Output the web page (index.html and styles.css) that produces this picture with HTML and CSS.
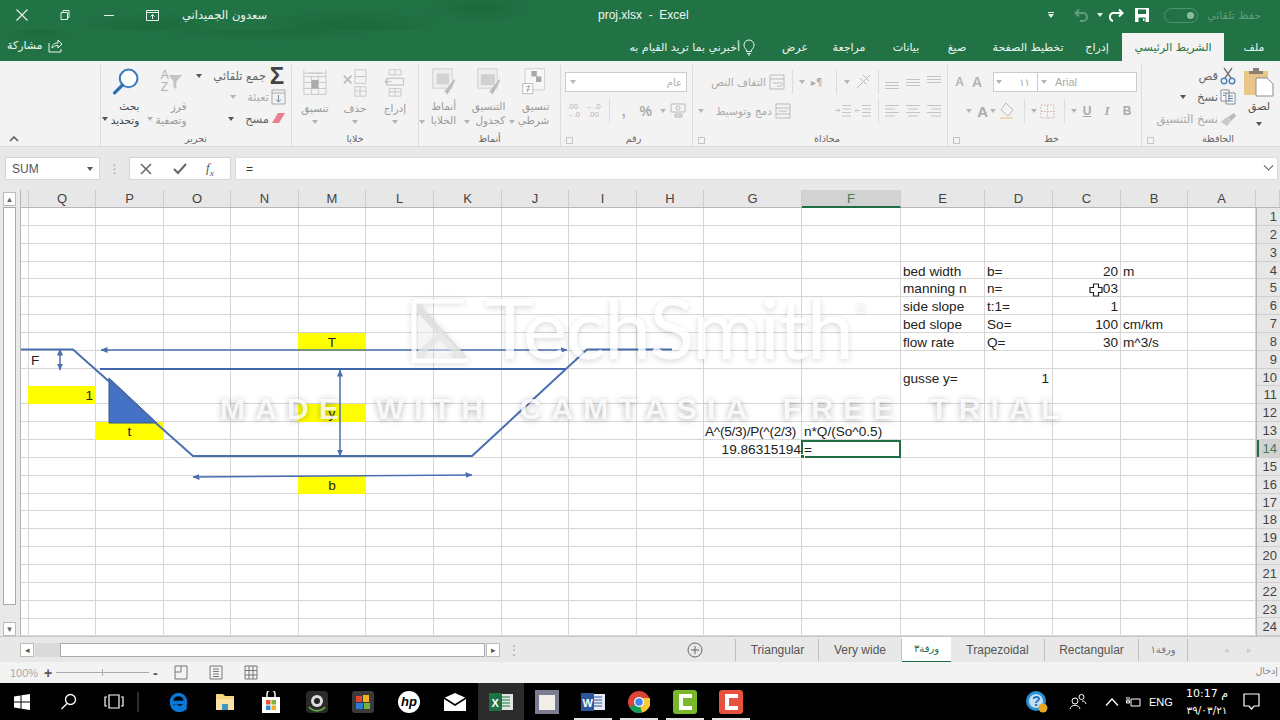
FILE: index.html
```html
<!DOCTYPE html>
<html lang="ar">
<head>
<meta charset="utf-8">
<title>proj.xlsx - Excel</title>
<link rel="stylesheet" href="styles.css">
</head>
<body>
<div class="app">

<header class="titlebar">
  <div class="win-btns">
    <span class="wb"><svg width="14" height="14" viewBox="0 0 14 14"><path d="M1.500 1.500l11 11M12.500 1.500l-11 11" stroke="#e8f0ea" stroke-width="1.200"/></svg></span>
    <span class="wb"><svg width="12" height="12" viewBox="0 0 12 12" fill="none" stroke="#e8f0ea"><path d="M2 3.500h6.500v7H2zM4 3.500V1.500h6v7H8.500"/></svg></span>
    <span class="wb"><svg width="12" height="12" viewBox="0 0 12 12"><path d="M1 6.500h10" stroke="#e8f0ea"/></svg></span>
    <span class="wb"><svg width="15" height="13" viewBox="0 0 15 13" fill="none" stroke="#e8f0ea"><path d="M1.500 1.500h12v10h-12zM1.500 3.500h12M7.500 10V5.500M5.500 7.500l2-2 2 2"/></svg></span>
    <span class="user">سعدون الجميداني</span>
  </div>
  <div class="doc-title">proj.xlsx&nbsp; -&nbsp; Excel</div>
  <div class="qat">
    <span class="q-more"><i class="q-line"></i><i class="q-tri"></i></span>
    <svg class="q-undo" width="18" height="16" viewBox="0 0 18 16" fill="none" stroke="#5f9d7b" stroke-width="2"><path d="M6 2.500L2.500 6 6 9.500M3 6h7a4 4 0 0 1 0 8H7"/></svg>
    <span class="q-caret"></span>
    <svg class="q-redo" width="18" height="16" viewBox="0 0 18 16" fill="none" stroke="#fff" stroke-width="2"><path d="M12 2.500L15.500 6 12 9.500M15 6H8a4 4 0 0 0-2 8"/></svg>
    <svg class="q-save" width="16" height="16" viewBox="0 0 16 16"><path d="M1 1h14v14H1z" fill="#fff"/><path d="M4 2.500h8v4.500H4zM4.500 10.500h7V15h-7z" fill="#217346"/><path d="M9 11.500h1.500V14H9z" fill="#fff"/></svg>
    <span class="toggle"><i class="knob"></i></span>
    <span class="autosave">حفظ تلقائي</span>
  </div>
</header>

<nav class="tabbar">
  <div class="share"><span>مشاركة</span><svg width="15" height="15" viewBox="0 0 15 15" fill="none" stroke="#eef5f0"><path d="M1 5v9h12v-3"/><path d="M4 10c0-4 3-5 6-5V2l4 4-4 4V7.500c-3 0-4 1-6 2.500z"/></svg></div>
  <div class="tabs">
    <span class="tab t-file">ملف</span>
    <span class="tab active">الشريط الرئيسي</span>
    <span class="tab t-ins">إدراج</span>
    <span class="tab t-page">تخطيط الصفحة</span>
    <span class="tab t-form">صيغ</span>
    <span class="tab t-data">بيانات</span>
    <span class="tab t-rev">مراجعة</span>
    <span class="tab t-view">عرض</span>
    <span class="tell"><svg width="12" height="17" viewBox="0 0 12 17" fill="none" stroke="#eef5f0"><path d="M3.500 11C2 9.500 1 8 1 6a5 5 0 0 1 10 0c0 2-1 3.500-2.500 5v1.500h-5zM4 14.500h4M5 16h2"/></svg><span>أخبرني بما تريد القيام به</span></span>
  </div>
</nav>

<section class="ribbon">
  <!-- Clipboard -->
  <div class="group g-clip">
    <div class="gbody clip-body">
      <div class="bigbtn paste">
        <svg width="32" height="30" viewBox="0 0 32 30"><path d="M1 4h24v24H1z" fill="#e9c58a"/><path d="M6 4h14v3H6z" fill="#8a7f70"/><path d="M10 1h6v4h-6z" fill="#8a7f70"/><path d="M13 11h11l6 6v12H13z" fill="#fff" stroke="#8f8f8f"/></svg>
        <span>لصق</span><i class="caret"></i>
      </div>
      <div class="stack">
        <div class="line-btn"><svg width="16" height="18" viewBox="0 0 16 18" fill="none"><path d="M4 1l7 10M12 1L5 11" stroke="#777" stroke-width="1.400"/><circle cx="4" cy="14" r="2.800" stroke="#4f7fb8" stroke-width="1.400"/><circle cx="12" cy="14" r="2.800" stroke="#4f7fb8" stroke-width="1.400"/></svg><span>قص</span></div>
        <div class="line-btn"><svg width="16" height="16" viewBox="0 0 16 16" fill="#fff" stroke="#888"><path d="M1 1h8v11H1zM6 4h9v11H6z"/><path d="M8 7h5M8 9.500h5M8 12h5M3 4h3M3 6.500h2" stroke="#5580aa"/></svg><span>نسخ</span><i class="caret dark gap"></i></div>
        <div class="line-btn off"><svg width="16" height="14" viewBox="0 0 16 14"><path d="M8 5l6-4 2 3-5 5z" fill="#bbb"/><path d="M1 10l6-5 4 4-4 5z" fill="#c8c8c8"/></svg><span>نسخ التنسيق</span></div>
      </div>
    </div>
    <div class="glabel shifted"><span>الحافظة</span><i class="launch"></i></div>
  </div>

  <!-- Font -->
  <div class="group g-font">
    <div class="gbody rows">
      <div class="rowline">
        <span class="field f-name"><i class="caret"></i><b>Arial</b></span>
        <span class="field f-size"><i class="caret"></i><b>١١</b></span>
        <span class="letter up">A</span>
        <span class="letter dn">A</span>
      </div>
      <div class="rowline">
        <span class="fmt b">B</span><span class="fmt i">I</span><span class="fmt u">U</span><i class="caret"></i><i class="vsep"></i>
        <svg class="ic16" width="17" height="17" viewBox="0 0 17 17" fill="none" stroke="#d8bdbd" stroke-dasharray="2 1"><path d="M2 2h13v13H2zM2 8.500h13M8.500 2v13"/></svg><i class="caret"></i><i class="vsep"></i>
        <svg class="ic16" width="18" height="18" viewBox="0 0 18 18" fill="none" stroke="#bbb"><path d="M8 1l7 7-5 6-7-6z"/><path d="M2 16h13" stroke="#eadbb0" stroke-width="2"/></svg><i class="caret"></i>
        <span class="letter big">A</span><i class="caret"></i>
      </div>
    </div>
    <div class="glabel shifted"><span>خط</span><i class="launch"></i></div>
  </div>

  <!-- Alignment -->
  <div class="group g-align">
    <div class="gbody rows">
      <div class="rowline al-row">
        <svg class="al" width="16" height="14" viewBox="0 0 16 14" stroke="#c4c4c4"><path d="M1 1.500h14M1 4.500h14M1 7.500h14"/></svg>
        <svg class="al" width="16" height="14" viewBox="0 0 16 14" stroke="#c4c4c4"><path d="M1 4.500h14M1 7.500h14M1 10.500h14"/></svg>
        <svg class="al" width="16" height="14" viewBox="0 0 16 14" stroke="#c4c4c4"><path d="M1 7.500h14M1 10.500h14M1 13.500h14"/></svg>
        <i class="vsep wide"></i>
        <svg class="al2" width="18" height="18" viewBox="0 0 18 18" fill="none" stroke="#bbb"><path d="M2 15L15 2M5 5l6 6M8 2l6 6"/></svg><i class="caret c-or"></i><i class="vsep sp1"></i>
        <span class="pil">▸¶</span><i class="caret"></i><i class="vsep sp2"></i>
        <span class="wide-btn"><svg width="16" height="16" viewBox="0 0 16 16" fill="none" stroke="#bbb"><path d="M1 1h14v14H1zM1 5h14M4 9h8c2 0 2 3 0 3H8"/></svg><span>التفاف النص</span></span>
      </div>
      <div class="rowline al-row">
        <svg class="al" width="16" height="14" viewBox="0 0 16 14" stroke="#c4c4c4"><path d="M1 1.500h14M5 5h10M1 8.500h14M5 12h10"/></svg>
        <svg class="al" width="16" height="14" viewBox="0 0 16 14" stroke="#c4c4c4"><path d="M1 1.500h14M3 5h10M1 8.500h14M3 12h10"/></svg>
        <svg class="al" width="16" height="14" viewBox="0 0 16 14" stroke="#c4c4c4"><path d="M1 1.500h14M1 5h10M1 8.500h14M1 12h10"/></svg>
        <i class="vsep wide"></i>
        <svg class="al3" width="16" height="14" viewBox="0 0 16 14" fill="none" stroke="#bfc6cc"><path d="M7 1.500h9M7 5h9M7 8.500h9M7 12h9M5 6.500H0M2 4.500L0 6.500l2 2"/></svg>
        <svg class="al3" width="16" height="14" viewBox="0 0 16 14" fill="none" stroke="#bfc6cc"><path d="M7 1.500h9M7 5h9M7 8.500h9M7 12h9M0 6.500h5M3 4.500l2 2-2 2"/></svg>
        <span class="wide-btn merge"><svg width="16" height="16" viewBox="0 0 16 16" fill="none" stroke="#bbb"><path d="M1 1h14v14H1zM1 5h14M1 11h14M4 8h8"/></svg><span>دمج وتوسيط</span></span><i class="caret c-mg"></i>
      </div>
    </div>
    <div class="glabel shifted"><span>محاذاة</span><i class="launch"></i></div>
  </div>

  <!-- Number -->
  <div class="group g-num">
    <div class="gbody rows">
      <div class="rowline"><span class="field f-num"><b>عام</b><i class="caret"></i></span></div>
      <div class="rowline num-row">
        <svg width="18" height="18" viewBox="0 0 18 18" fill="none" stroke="#bbb"><path d="M2 2h14v8H2z"/><circle cx="9" cy="6" r="2"/><path d="M6 12h7v3H6z" fill="#ddd"/></svg><i class="caret"></i>
        <span class="pct">%</span><span class="comma">,</span><i class="vsep"></i>
        <span class="dec">←.0<br>.00</span><span class="dec">.00<br>→.0</span>
      </div>
    </div>
    <div class="glabel shifted"><span>رقم</span><i class="launch"></i></div>
  </div>

  <!-- Styles -->
  <div class="group g-styles">
    <div class="gbody cols">
      <div class="bigbtn st">
        <svg width="30" height="36" viewBox="0 0 30 36"><path d="M4 1h25v27H4z" fill="#f7f7f7" stroke="#c8c8c8"/><path d="M12 4h7v7h-7zM18 11h7v7h-7z" fill="#a9a9a9"/><path d="M1 20h13v13H1z" fill="#fff" stroke="#aaa"/><path d="M5 24h6M5 28h6M9 22l-2 9" stroke="#999" fill="none"/></svg>
        <span>تنسيق<br>شرطي</span><i class="caret abs"></i>
      </div>
      <div class="bigbtn st">
        <svg width="30" height="36" viewBox="0 0 30 36"><path d="M1 1h25v25H1z" fill="#eee" stroke="#c8c8c8"/><path d="M5 8h18v14H5z" fill="#d0d0d0"/><path d="M16 30L29 14l1 2-10 18z" fill="#bbb"/></svg>
        <span>التنسيق<br>كجدول</span><i class="caret abs"></i>
      </div>
      <div class="bigbtn st">
        <svg width="30" height="36" viewBox="0 0 30 36"><path d="M1 1h25v25H1z" fill="#eee" stroke="#c8c8c8"/><path d="M6 7h16v14H6z" fill="#d3d3d3"/><path d="M16 30L29 14l1 2-10 18z" fill="#bbb"/></svg>
        <span>أنماط<br>الخلايا</span><i class="caret abs"></i>
      </div>
    </div>
    <div class="glabel"><span>أنماط</span></div>
  </div>

  <!-- Cells -->
  <div class="group g-cells">
    <div class="gbody cols">
      <div class="bigbtn cellbtn">
        <svg width="26" height="34" viewBox="0 0 26 34" fill="none" stroke="#c4c4c4"><path d="M6 2h14v6H6zM13 2v6M6 24h14v9H6zM13 24v9M6 28h14"/><path d="M3 12h20v8H3zM9 16H1M4 13l-3 3 3 3" stroke="#b5b5b5"/></svg>
        <span>إدراج</span><i class="caret"></i>
      </div>
      <div class="bigbtn cellbtn">
        <svg width="28" height="34" viewBox="0 0 28 34" fill="none" stroke="#c4c4c4"><path d="M14 2h13v8H14zM14 10h13v8H14zM14 22h13v11H14zM20 22v11M14 27h13"/><path d="M1 9l9 9M10 9l-9 9" stroke="#bbb" stroke-width="2"/></svg>
        <span>حذف</span><i class="caret"></i>
      </div>
      <div class="bigbtn cellbtn">
        <svg width="28" height="34" viewBox="0 0 28 34" fill="none" stroke="#c4c4c4"><path d="M1 6h26M1 2v8M27 2v8M6 6h16"/><path d="M1 10h26v21H1zM1 17h26M1 24h26M10 10v21M18 10v21"/><path d="M10 14h8v10h-8z" fill="#aaa" stroke="none"/></svg>
        <span>تنسيق</span><i class="caret"></i>
      </div>
    </div>
    <div class="glabel"><span>خلايا</span></div>
  </div>

  <!-- Editing -->
  <div class="group g-edit">
    <div class="gbody edit-body">
      <div class="stack ed">
        <div class="line-btn"><span class="sigma">Σ</span><span>جمع تلقائي</span><i class="caret dark gap"></i></div>
        <div class="line-btn off"><svg width="15" height="16" viewBox="0 0 15 16" fill="none" stroke="#aaa"><path d="M1 1h13v14H1zM1 4h13" /><path d="M7.500 6v7M5 10.500l2.500 2.500 2.500-2.500" stroke="#6d8da8"/></svg><span>تعبئة</span><i class="caret gap"></i></div>
        <div class="line-btn"><svg width="15" height="14" viewBox="0 0 15 14"><path d="M7 1h7L8 11H1z" fill="#ea7f8d"/></svg><span>مسح</span><i class="caret dark gap"></i></div>
      </div>
      <div class="bigbtn sort">
        <svg width="32" height="38" viewBox="0 0 32 38"><text x="1" y="16" class="az">A</text><text x="1" y="33" class="az">Z</text><path d="M12 10h19l-8 9v11l-4-3v-8z" fill="#c4c4c4"/></svg>
        <span>فرز<br>وتصفية</span><i class="caret abs"></i>
      </div>
      <div class="bigbtn find">
        <svg width="26" height="26" viewBox="0 0 26 26" fill="none"><circle cx="16" cy="10" r="8.500" stroke="#3a7cc0" stroke-width="2" fill="#fff"/><path d="M10 16.500L2.500 24" stroke="#2d6fb5" stroke-width="3.200" stroke-linecap="round"/></svg>
        <span>بحث<br>وتحديد</span><i class="caret dark abs"></i>
      </div>
    </div>
    <div class="glabel"><span>تحرير</span></div>
  </div>

  <div class="collapse"><svg width="10" height="6" viewBox="0 0 10 6" fill="none" stroke="#555" stroke-width="1.500"><path d="M1 5l4-4 4 4"/></svg></div>
</section>

<section class="formulabar">
  <div class="namebox"><span>SUM</span><i class="caret dark"></i></div>
  <div class="fdots">⋮</div>
  <div class="fbtns">
    <svg width="12" height="12" viewBox="0 0 12 12"><path d="M1 1l10 10M11 1L1 11" stroke="#666" stroke-width="1.500"/></svg>
    <svg width="14" height="12" viewBox="0 0 14 12"><path d="M1 6l4 4 8-9" fill="none" stroke="#666" stroke-width="2"/></svg>
    <span class="fx">f<sub>x</sub></span>
  </div>
  <div class="finput"><span>=</span><i class="caret-v"></i></div>
</section>

<main class="sheet">
  <div class="vscroll">
    <span class="vbtn">▴</span>
    <div class="vtrack"><div class="vthumb"></div></div>
    <span class="vbtn">▾</span>
  </div>
  <div class="sheet-main">
    <div class="colhead">
      <span></span><span>Q</span><span>P</span><span>O</span><span>N</span><span>M</span><span>L</span><span>K</span><span>J</span><span>I</span><span>H</span><span>G</span><span class="selcol">F</span><span>E</span><span>D</span><span>C</span><span>B</span><span>A</span><span class="corner"></span>
    </div>
    <div class="sheet-body">
      <div class="grid">
        <i class="vl cr"></i><i class="vl cq"></i><i class="vl cp"></i><i class="vl co"></i><i class="vl cn"></i><i class="vl cm"></i><i class="vl cl"></i><i class="vl ck"></i><i class="vl cj"></i><i class="vl ci"></i><i class="vl ch"></i><i class="vl cg"></i><i class="vl cf"></i><i class="vl ce"></i><i class="vl cd"></i><i class="vl cc"></i><i class="vl cb"></i><i class="vl ca"></i>

        <div class="cell ce r4">bed width</div><div class="cell cd r4">b=</div><div class="cell cc r4 num">20</div><div class="cell cb r4">m</div>
        <div class="cell ce r5">manning n</div><div class="cell cd r5">n=</div><div class="cell cc r5 num">.03</div>
        <div class="cell ce r6">side slope</div><div class="cell cd r6">t:1=</div><div class="cell cc r6 num">1</div>
        <div class="cell ce r7">bed slope</div><div class="cell cd r7">So=</div><div class="cell cc r7 num">100</div><div class="cell cb r7">cm/km</div>
        <div class="cell ce r8">flow rate</div><div class="cell cd r8">Q=</div><div class="cell cc r8 num">30</div><div class="cell cb r8">m^3/s</div>
        <div class="cell ce r10">gusse y=</div><div class="cell cd r10 num">1</div>
        <div class="cell cg r13 tight">A^(5/3)/P(^(2/3)</div><div class="cell cf r13">n*Q/(So^0.5)</div>
        <div class="cell cg r14 num tightr">19.86315194</div><div class="cell cf r14 sel">=<i class="handle"></i></div>

        <div class="cell cm r8 yel ctr">T</div>
        <div class="cell cm r12 yel ctr">y</div>
        <div class="cell cm r16 yel ctr">b</div>
        <div class="cell cq r11 yel num">1</div>
        <div class="cell cp r13 yel ctr">t</div>
        <div class="cell cq r9 flabel">F</div>

        <svg class="diagram" width="1235" height="428" viewBox="21 208 1235 428" fill="none">
          <defs>
            <marker id="ah" markerWidth="8" markerHeight="8" refX="6.500" refY="3" orient="auto-start-reverse" markerUnits="userSpaceOnUse"><path d="M0 0l7 3-7 3z" fill="#4a6fb0"/></marker>
          </defs>
          <path d="M109 378v45h48z" fill="#4472c4" stroke="#2f5597"/>
          <path d="M21 349.500h52L193 456h279l115-106.500h85" stroke="#4a6fb0" stroke-width="2"/>
          <path d="M100 369h466" stroke="#3f66aa" stroke-width="2"/>
          <path class="dim" d="M101 350h466" marker-start="url(#ah)" marker-end="url(#ah)"/>
          <path class="dim" d="M340 370v86" marker-start="url(#ah)" marker-end="url(#ah)"/>
          <path class="dim" d="M60 349v21" marker-start="url(#ah)" marker-end="url(#ah)"/>
          <path class="dim" d="M193 477l279-2" marker-start="url(#ah)" marker-end="url(#ah)"/>
        </svg>
      </div>
      <div class="rowhead">
        <span>1</span><span>2</span><span>3</span><span>4</span><span>5</span><span>6</span><span>7</span><span>8</span><span>9</span><span>10</span><span>11</span><span>12</span><span>13</span><span class="selrow">14</span><span>15</span><span>16</span><span>17</span><span>18</span><span>19</span><span>20</span><span>21</span><span>22</span><span>23</span><span>24</span>
      </div>
    </div>
  </div>

  <svg class="cursor" width="14" height="14" viewBox="0 0 14 14"><path d="M4.500 1h5v3.500H13v5H9.500V13h-5V9.500H1v-5h3.500z" fill="#fff" stroke="#222" stroke-width="1.200"/></svg>

  <div class="wm-top">
    <svg class="wm-logo" width="60" height="64" viewBox="0 0 60 64" fill="none" stroke-linejoin="miter"><path d="M8 4l44 50H8z" fill="#fff" fill-opacity=".55"/><path d="M4 4l50 56" stroke="#dcdcdc" stroke-width="7"/><path d="M4 60L30 36 52 60" stroke="#e4e4e4" stroke-width="6"/><path d="M4 2v60h54M4 2h50" stroke="#fff" stroke-width="5"/></svg>
    <span class="wm-name">TechSmith</span><sup class="wm-r">®</sup>
  </div>
  <div class="wm-bottom">MADE WITH CAMTASIA FREE TRIAL</div>
</main>

<footer class="sheetbar">
  <span class="hbtn">◂</span>
  <div class="htrack"><div class="hthumb"></div></div>
  <span class="hbtn">▸</span>
  <span class="hdots">⋮</span>
  <span class="addsheet"><svg width="16" height="16" viewBox="0 0 16 16" fill="none" stroke="#666"><circle cx="8" cy="8" r="7"/><path d="M8 4v8M4 8h8"/></svg></span>
  <div class="sheettabs">
    <span class="stab w-tri">Triangular</span>
    <span class="stab w-vw">Very wide</span>
    <span class="stab cur">ورقة٣</span>
    <span class="stab w-tra">Trapezoidal</span>
    <span class="stab w-rec">Rectangular</span>
    <span class="stab w-ar">ورقة١</span>
  </div>
  <span class="nav"><i>◂</i><i>▸</i></span>
</footer>

<div class="statusbar">
  <span class="zoompct">100%</span>
  <span class="zplus">+</span>
  <span class="zslider"><i></i></span>
  <span class="zminus">-</span>
  <svg class="vw" width="14" height="15" viewBox="0 0 14 15" fill="none" stroke="#777"><path d="M1 1h12v13H1zM7 1v6H1"/></svg>
  <svg class="vw" width="14" height="15" viewBox="0 0 14 15" fill="none" stroke="#777"><path d="M1 1h12v13H1zM4 4h6M4 6.500h6M4 9h6M4 11.500h6"/></svg>
  <svg class="vw" width="14" height="15" viewBox="0 0 14 15" fill="none" stroke="#777"><path d="M1 1h12v13H1zM1 5.500h12M1 10h12M5 1v13M9 1v13"/></svg>
  <span class="mode">إدخال</span>
</div>

<div class="taskbar">
  <div class="tb-left">
    <span class="tk"><svg width="16" height="16" viewBox="0 0 16 16" fill="#fff"><path d="M0 2.500l6.500-1v6H0zM7.500 1.300L16 0v7.500H7.500zM0 8.500h6.500v6l-6.500-1zM7.500 8.500H16V16l-8.500-1.300z"/></svg></span>
    <span class="tk"><svg width="17" height="17" viewBox="0 0 17 17" fill="none" stroke="#fff" stroke-width="1.300"><circle cx="10.500" cy="6.500" r="5"/><path d="M7 10.500L1.500 16"/></svg></span>
    <span class="tk"><svg width="20" height="15" viewBox="0 0 20 15" fill="none" stroke="#fff" stroke-width="1.200"><path d="M5 1h10v13H5zM3 3H1v9h2M17 3h2v9h-2"/></svg></span>
    <i class="tk-sep"></i>
    <span class="tk"><svg width="20" height="22" viewBox="0 0 20 20" fill="none"><path d="M2.500 10.500h14c0-5-3-8-7-8-4 0-7 3-7 8 0 5 3.500 8 7.500 8 2.500 0 4.500-.7 6-2v-3.500c-1.500 1.500-3.500 2.500-5.500 2.500-2 0-3.500-1-3.500-3" stroke="#0a78d7" stroke-width="3.500"/></svg></span>
    <span class="tk"><svg width="20" height="20" viewBox="0 0 20 20"><path d="M1 2h7l2 2h9v14H1z" fill="#f3d67d"/><path d="M1 7h18v11H1z" fill="#f9e4a3"/><path d="M7 12h6v6H7z" fill="#3f95c4"/></svg></span>
    <span class="tk"><svg width="20" height="22" viewBox="0 0 20 22"><path d="M1 6h18v16H1z" fill="#fff"/><path d="M6 6V3a4 4 0 0 1 8 0v3" fill="none" stroke="#fff" stroke-width="1.500"/><path d="M5 9h4.500v4.500H5z" fill="#e2572b"/><path d="M10.500 9H15v4.500h-4.500z" fill="#7fb53b"/><path d="M5 14.500h4.500V19H5z" fill="#2d8ad8"/><path d="M10.500 14.500H15V19h-4.500z" fill="#f2b01e"/></svg></span>
    <span class="tk"><svg width="22" height="22" viewBox="0 0 22 22"><rect width="22" height="22" rx="4" fill="#2a2a2a"/><circle cx="11" cy="10" r="6" fill="#ddd"/><circle cx="11" cy="10" r="3" fill="#222"/><path d="M3 16c4 5 12 5 16 0" stroke="#5fa34a" stroke-width="2" fill="none"/></svg></span>
    <span class="tk"><svg width="22" height="22" viewBox="0 0 22 22"><rect width="22" height="22" rx="3" fill="#3a3a3a"/><path d="M4 5h6v6H4z" fill="#e2452b"/><path d="M11 4h6v7h-6z" fill="#f2b01e"/><path d="M4 12h7v6H4z" fill="#2e7bd6"/><path d="M12 12h6v6h-6z" fill="#6fb33c"/></svg></span>
    <span class="tk"><span class="hp">hp</span></span>
    <span class="tk"><svg width="22" height="18" viewBox="0 0 22 18"><path d="M0 5L11 0l11 5v13H0z" fill="#fff"/><path d="M0 5l11 7 11-7" fill="none" stroke="#000" stroke-width="1.500"/></svg></span>
    <span class="tk on"><svg width="24" height="20" viewBox="0 0 24 20"><path d="M10 2h14v16H10z" fill="#dfe9e2"/><path d="M13 5h8M13 8h8M13 11h8M13 14h8" stroke="#1e7145"/><path d="M0 1h13v18H0z" fill="#1e7145"/><text x="2.500" y="14.500" class="ltr-x">X</text></svg></span>
    <span class="tk"><svg width="24" height="24" viewBox="0 0 24 24"><path d="M0 0h24v24H0z" fill="#7c7c90"/><path d="M4 5h16v15H4z" fill="#f0eee6"/></svg></span>
    <span class="tk run"><svg width="24" height="20" viewBox="0 0 24 20"><path d="M10 2h14v16H10z" fill="#e4e9f2"/><path d="M13 5h8M13 8h8M13 11h8M13 14h8" stroke="#2b579a"/><path d="M0 1h13v18H0z" fill="#2b579a"/><text x="1.500" y="14.500" class="ltr-x">W</text></svg></span>
    <span class="tk run"><svg width="22" height="22" viewBox="0 0 22 22"><circle cx="11" cy="11" r="11" fill="#db4437"/><path d="M11 11L1.500 16.500A11 11 0 0 0 14 21.600z" fill="#0f9d58"/><path d="M11 11l3 10.600A11 11 0 0 0 21.800 7H11z" fill="#fcc934"/><circle cx="11" cy="11" r="5" fill="#fff"/><circle cx="11" cy="11" r="3.800" fill="#4285f4"/></svg></span>
    <span class="tk run"><svg width="24" height="24" viewBox="0 0 24 24"><rect width="24" height="24" rx="3" fill="#78b82a"/><path d="M19 6H8v12h11" fill="none" stroke="#fff" stroke-width="4"/></svg></span>
    <span class="tk run"><svg width="24" height="24" viewBox="0 0 24 24"><rect width="24" height="24" rx="3" fill="#e8513d"/><path d="M19 6H8v12h11" fill="none" stroke="#fff" stroke-width="4"/></svg></span>
  </div>
  <div class="tb-right">
    <svg class="help" width="22" height="22" viewBox="0 0 22 22"><circle cx="10" cy="10" r="10" fill="#2b8fd6"/><circle cx="10" cy="10" r="7" fill="#bfe0f5"/><text x="6" y="15" class="q">?</text><circle cx="17" cy="17" r="4.500" fill="#e8a51e"/></svg>
    <svg class="people" width="18" height="18" viewBox="0 0 18 18" fill="none" stroke="#fff"><circle cx="6" cy="8" r="3"/><path d="M1 16c1-5 9-5 10 0"/><circle cx="12.500" cy="4" r="2.500"/><path d="M13 8c2 0 3.500 1 4 3"/></svg>
    <svg class="chev" width="14" height="8" viewBox="0 0 14 8" fill="none" stroke="#fff" stroke-width="1.300"><path d="M1 7.500L7 1l6 6.500"/></svg>
    <svg class="batt" width="15" height="14" viewBox="0 0 15 14" fill="none" stroke="#fff"><path d="M5 4h9v7H5zM1 2v4M3 2v4M0.500 6h3v2h-3z"/></svg>
    <span class="eng">ENG</span>
    <span class="clock"><span class="time">10:17 م</span><bdi class="date">٣٩/٠٣/٢١</bdi></span>
    <svg class="notif" width="17" height="17" viewBox="0 0 17 17" fill="none" stroke="#fff" stroke-width="1.200"><path d="M1 1h15v12h-5l-2.500 3L6 13H1z"/></svg>
  </div>
</div>

</div>
</body>
</html>
```
FILE: styles.css
```css
* { box-sizing: border-box; }
html, body { margin: 0; padding: 0; }
body { font-family: "Liberation Sans", "DejaVu Sans", sans-serif; background: #fff; overflow: hidden; }
.app { width: 1280px; height: 720px; display: flex; flex-direction: column; overflow: hidden; }

i { font-style: normal; display: block; }

/* Title bar */
.titlebar { height: 30px; display: flex; align-items: center; color: #f0f6f2; position: relative; background:
  radial-gradient(ellipse 90px 16px at 150px 26px, #1c6a3e, transparent),
  radial-gradient(ellipse 110px 26px at 350px 30px, #1b683c, transparent),
  radial-gradient(ellipse 70px 16px at 480px 8px, #1c6a3e, transparent),
  #217346; }
.win-btns { display: flex; align-items: center; width: 560px; }
.wb { width: 43.500px; display: flex; justify-content: center; }
.user { font: 11.500px "DejaVu Sans", sans-serif; margin-left: 8px; }
.doc-title { position: absolute; left: 598px; top: 8px; font: 12px "Liberation Sans", sans-serif; }
.qat { position: absolute; left: 1047px; top: 0; height: 30px; width: 233px; display: flex; align-items: center; }
.q-more { width: 7px; display: flex; flex-direction: column; gap: 1px; align-items: center; }
.q-line { width: 6px; height: 1px; background: #e4efe8; }
.q-tri { width: 0; height: 0; border: 3px solid transparent; border-top: 4px solid #e4efe8; border-bottom: 0; }
.q-undo { margin-left: 19px; }
.q-caret { width: 0; height: 0; border: 3px solid transparent; border-top: 4px solid #e4efe8; border-bottom: 0; margin: 0 4px 0 6px; }
.q-redo { margin-left: 0; }
.q-save { margin-left: 9px; }
.toggle { width: 34px; height: 15px; border: 1px solid #4f9370; border-radius: 8px; margin-left: 14px; display: flex; justify-content: flex-end; align-items: center; padding-right: 3px; }
.knob { width: 7px; height: 7px; border-radius: 50%; background: #8cbba2; }
.autosave { font: 11px "DejaVu Sans", sans-serif; color: #5f9d7b; margin-left: 9px; }

/* Tab bar */
.tabbar { height: 31px; display: flex; justify-content: space-between; align-items: stretch; color: #eef5f0; background:
  radial-gradient(ellipse 40px 18px at 40px 0, #1c6a3e, transparent),
  radial-gradient(ellipse 150px 14px at 270px 0, #1c6a3e, transparent), #217346; }
.share { display: flex; align-items: center; gap: 5px; padding-left: 7px; font: 11px "DejaVu Sans", sans-serif; }
.tabs { direction: rtl; display: flex; align-items: flex-end; font: 11px "DejaVu Sans", sans-serif; height: 100%; width: 660px; }
.tab { display: flex; align-items: center; justify-content: center; height: 28px; white-space: nowrap; }
.t-file { width: 56px; padding-left: 4px; }
.tab.active { width: 102px; background: #f3f3f3; color: #217346; }
.t-ins { width: 44px; margin-right: 3px; }
.t-page { width: 90px; margin-right: 2px; }
.t-form { width: 44px; margin-right: 4px; }
.t-data { width: 44px; margin-right: 7px; }
.t-rev { width: 52px; margin-right: 9px; }
.t-view { width: 36px; margin-right: 10px; }
.tell { display: flex; align-items: center; gap: 3px; margin-right: 22px; height: 28px; white-space: nowrap; }

/* Ribbon */
.ribbon { height: 86px; background: #f3f3f3; border-bottom: 1px solid #dadada; direction: rtl; display: flex; font: 10px "DejaVu Sans", sans-serif; color: #777; }
.group { position: relative; display: flex; flex-direction: column; border-left: 1px solid #dcdcdc; margin-top: 4px; flex: none; }
.gbody { flex: 1; }
.glabel { height: 15px; display: flex; justify-content: center; align-items: center; position: relative; color: #666; font-size: 9.500px; }
.glabel.shifted { padding-left: 14px; }
.launch { position: absolute; left: 5px; bottom: 2px; width: 7px; height: 7px; border: 1px solid #c5c5c5; }
.g-clip { width: 139px; }
.g-font { width: 194px; }
.g-align { width: 255px; }
.g-num { width: 132px; }
.g-styles { width: 142px; }
.g-cells { width: 127px; }
.g-edit { width: 191px; }
.collapse { flex: 1; display: flex; justify-content: flex-start; align-items: flex-end; direction: ltr; padding: 0 0 4px 9px; }

.caret { width: 0; height: 0; border: 3px solid transparent; border-top: 4px solid #b5b5b5; border-bottom: 0; flex: none; }
.caret.dark { border-top-color: #555; }
.caret.gap { margin-right: 9px; }
.caret.abs { position: absolute; }

.bigbtn { position: relative; display: flex; flex-direction: column; align-items: center; font-size: 10px; line-height: 14px; color: #9a9a9a; flex: none; }

.clip-body { display: flex; }
.paste { width: 42px; padding-top: 2px; color: #555; font-size: 11px; }
.paste span { margin-top: 3px; }
.paste .caret { margin-top: 8px; border-top-color: #555; }
.stack { display: flex; flex-direction: column; margin-right: 2px; }
.line-btn { display: flex; align-items: center; height: 21.500px; gap: 2px; color: #666; white-space: nowrap; font-size: 11.500px; }
.line-btn.off { color: #aaa; }

.rows { padding-top: 5px; display: flex; flex-direction: column; gap: 5px; padding-right: 4px; }
.rowline { height: 24px; display: flex; align-items: center; }
.field { height: 20px; background: #fff; border: 1px solid #ccc; display: flex; align-items: center; direction: ltr; }
.field b { font-weight: normal; color: #aaa; }
.f-name { width: 100px; padding-left: 3px; gap: 6px; font: 11px "Liberation Sans", sans-serif; }
.f-name b { font-size: 11px; margin-left: 2px; }
.f-size { width: 45px; padding-left: 2px; margin-right: -1px; justify-content: space-between; padding-right: 7px; }
.letter { position: relative; font: bold 13px "Liberation Sans", sans-serif; color: #b3b3b3; }
.letter.up { margin-right: 11px; font-size: 14px; }
.letter.dn { margin-right: 8px; font-size: 12px; }
.letter.big { font-size: 15px; margin-right: 2px; color: #aaa; margin-left: 5px; }
.fmt { width: 20px; text-align: center; font: bold 12px "Liberation Sans", sans-serif; color: #aaa; }
.fmt.i { font-style: italic; font-family: "Liberation Serif", serif; font-size: 13px; }
.fmt.u { text-decoration: underline; }
.vsep { width: 1px; height: 24px; background: #dcdcdc; margin: 0 6px; flex: none; }
.ic16 { margin: 0 2px; flex: none; }

.al { margin-left: 5px; flex: none; }
.al-row { padding-right: 1px; }
.al2 { margin-right: 1px; flex: none; }
.al3 { margin-left: 4px; flex: none; }
.vsep.wide { margin: 0 0 0 4px; }
.vsep.wide + .al3 { margin-right: 3px; }
.c-or { margin-right: 5px; }
.vsep.sp1 { margin: 0 7px 0 9px; }
.vsep.sp2 { margin: 0 6px 0 7px; }
.pil { color: #aaa; font-size: 10px; direction: ltr; margin-left: 6px; width: 16px; white-space: nowrap; }
.wide-btn { display: flex; align-items: center; gap: 3px; color: #aaa; white-space: nowrap; font-size: 10.600px; }
.merge { margin-right: 40px; }
.c-mg { margin-right: 12px; }

.f-num { width: 122px; margin-right: 1px; justify-content: space-between; direction: rtl; padding: 0 4px; }
.num-row { padding-right: 1px; gap: 3px; }
.pct { font: bold 14px "Liberation Sans", sans-serif; color: #aaa; margin-right: 5px; }
.comma { font: bold 14px "Liberation Sans", sans-serif; color: #aaa; margin-right: 11px; }
.num-row .vsep { margin: 0 9px 0 5px; }
.dec { font: 8px/8px "Liberation Sans", sans-serif; color: #b5b5b5; direction: ltr; text-align: center; margin-left: 3px; }

.cols { display: flex; padding-top: 3px; }
.st { width: 45px; }
.g-styles .cols { padding-right: 4px; }
.st svg { height: 28px; width: auto; }
.st span { margin-top: 3px; white-space: nowrap; font-size: 10.500px; }
.st .caret.abs { right: 41px; top: 52px; }
.g-cells .cols { padding-right: 3px; }
.cellbtn { width: 40px; }
.cellbtn svg { height: 29px; width: auto; }
.cellbtn span { margin-top: 4px; font-size: 10.500px; }
.cellbtn .caret { margin-top: 5px; }

.edit-body { display: flex; }
.stack.ed { width: 97px; margin-right: 0; padding-right: 5px; }
.sigma { font: bold 24px/18px "Liberation Sans", sans-serif; color: #444; width: 18px; text-align: center; }
.sort { width: 46px; padding-top: 3px; }
.sort svg { height: 27px; width: auto; direction: ltr; }
.find svg { height: 27px; width: 27px; }
.sort span, .find span { margin-top: 4px; white-space: nowrap; font-size: 10.500px; }
.sort .caret.abs { right: 41px; top: 52px; }
.find { width: 46px; padding-top: 3px; color: #444; }
.find .caret.abs { right: 40px; top: 52px; }
.az { font: 17px "Liberation Sans", sans-serif; fill: #b0b0b0; direction: ltr; }

/* Formula bar */
.formulabar { height: 43px; background: #e8e8e8; display: flex; align-items: center; padding: 0 2px 0 5px; }
.namebox { width: 95px; height: 23px; background: #fff; border: 1px solid #d5d5d5; display: flex; align-items: center; justify-content: space-between; padding: 0 6px; font: 12px "Liberation Sans", sans-serif; color: #555; }
.fdots { width: 29px; text-align: center; color: #999; font-size: 12px; }
.fbtns { width: 102px; height: 23px; background: #fff; border: 1px solid #d5d5d5; display: flex; align-items: center; gap: 21px; padding-left: 10px; }
.fx { font: italic 13px "Liberation Serif", serif; color: #555; margin-left: -2px; }
.fx sub { font-size: 9px; }
.finput { flex: 1; margin-left: 4px; height: 23px; background: #fff; border: 1px solid #ddd; display: flex; align-items: center; justify-content: space-between; padding: 0 5px 0 10px; font: 12px "Liberation Sans", sans-serif; color: #333; }
.caret-v { width: 7px; height: 7px; border-right: 1.500px solid #555; border-bottom: 1.500px solid #555; transform: rotate(45deg) translate(-2px, -2px); }

/* Sheet */
.sheet { height: 446px; display: flex; position: relative; overflow: hidden; background: #fff; }
.vscroll { width: 21px; flex: none; background: #e9e9e9; display: flex; flex-direction: column; padding: 2px 4px 0 3px; border-right: 1px solid #b5b5b5; }
.vbtn { height: 14px; background: #fff; border: 1px solid #bbb; font: 9px/12px "DejaVu Sans", sans-serif; text-align: center; color: #666; flex: none; }
.vtrack { flex: 1; padding-top: 1px; }
.vthumb { height: 398px; background: #fff; border: 1px solid #aaa; }
.sheet-main { flex: 1; display: flex; flex-direction: column; min-width: 0; }
.colhead { height: 18px; display: grid; grid-template-columns: 8px 67px 68px 67px 68px 67px 68px 68px 67px 68px 67px 98px 99px 84px 68px 68px 67px 68px 24px; grid-template-rows: 17px; background: #e7e7e7; border-bottom: 1px solid #b8b8b8; font: 13px/18px "Liberation Sans", sans-serif; color: #444; text-align: center; position: relative; z-index: 1; }
.colhead span { border-right: 1px solid #cdcdcd; }
.colhead .selcol { background: #d2d2d2; border-bottom: 2px solid #1f6e43; margin-bottom: -1px; color: #3f7a5a; }
.sheet-body { flex: 1; display: flex; min-height: 0; }
.grid { position: relative; width: 1235px; display: grid; grid-template-columns: 8px 67px 68px 67px 68px 67px 68px 68px 67px 68px 67px 98px 99px 84px 68px 68px 67px 68px; grid-template-rows: repeat(24, 17.850px); background: repeating-linear-gradient(to bottom, #fff 0, #fff 16.850px, #d6d6d6 16.850px, #d6d6d6 17.850px); font: 13.600px/19px "Liberation Sans", sans-serif; color: #222; }
.vl { grid-row: 1 / -1; border-right: 1px solid #d6d6d6; }
.cr { grid-column: 1; } .cq { grid-column: 2; } .cp { grid-column: 3; } .co { grid-column: 4; } .cn { grid-column: 5; } .cm { grid-column: 6; } .cl { grid-column: 7; } .ck { grid-column: 8; } .cj { grid-column: 9; } .ci { grid-column: 10; } .ch { grid-column: 11; } .cg { grid-column: 12; } .cf { grid-column: 13; } .ce { grid-column: 14; } .cd { grid-column: 15; } .cc { grid-column: 16; } .cb { grid-column: 17; } .ca { grid-column: 18; }
.r4 { grid-row: 4; } .r5 { grid-row: 5; } .r6 { grid-row: 6; } .r7 { grid-row: 7; } .r8 { grid-row: 8; } .r9 { grid-row: 9; } .r10 { grid-row: 10; } .r11 { grid-row: 11; } .r12 { grid-row: 12; } .r13 { grid-row: 13; } .r14 { grid-row: 14; } .r16 { grid-row: 16; }
.cell { padding: 0 2px; white-space: nowrap; min-width: 0; }
.num { text-align: right; padding-right: 3px; }
.cd.num { padding-right: 4px; }
.ctr { text-align: center; }
.yel { background: #ffff00; margin-left: -1px; }
.tight { padding: 0 0 0 1px; letter-spacing: -.25px; }
.tightr { padding-right: 1px; }
.sel { position: relative; border: 2px solid #1f6e43; padding: 0 0 0 1px; line-height: 15px; margin: 0 0 0 -1px; }
.handle { position: absolute; left: -3px; bottom: -3px; width: 5px; height: 5px; background: #1f6e43; border: 1px solid #fff; }
.diagram { position: absolute; left: 0; top: 0; pointer-events: none; }
.dim { stroke: #4a6fb0; stroke-width: 1.500; }
.rowhead { width: 24px; flex: none; display: grid; grid-template-rows: repeat(24, 17.850px); background: #e7e7e7; border-left: 1px solid #b8b8b8; font: 13px/18px "Liberation Sans", sans-serif; color: #444; text-align: right; }
.rowhead span { padding-right: 3px; border-bottom: 1px solid #cfcfcf; }
.rowhead .selrow { background: #d2d2d2; box-shadow: inset 2px 0 0 #1f6e43; color: #3f7a5a; }

.cursor { position: absolute; left: 1089px; top: 93px; }
.wm-top { position: absolute; left: 410px; top: 109px; display: flex; align-items: flex-start; color: #fff; z-index: 2; }
.wm-logo { filter: drop-shadow(0 1px 3px rgba(0,0,0,.18)); opacity: .85; }
.wm-name { font: 400 84px/84px Lato, sans-serif; margin: -14px 0 0 15px; letter-spacing: -1.500px; opacity: .8; text-shadow: 0 2px 6px rgba(0,0,0,.2); }
.wm-r { font-size: 14px; opacity: .7; margin: 2px 0 0 4px; line-height: 14px; text-shadow: 0 1px 3px rgba(0,0,0,.3); }
.wm-bottom { position: absolute; left: 220px; top: 202px; width: 840px; font: bold 30px/34px "Liberation Sans", sans-serif; letter-spacing: 10.200px; color: rgba(255,255,255,.85); text-shadow: 0 1px 6px rgba(0,0,0,.3); white-space: nowrap; word-spacing: 8px; z-index: 2; }

/* Sheet tabs */
.sheetbar { height: 26px; background: #e8e8e8; border-top: 1px solid #c8c8c8; display: flex; align-items: center; position: relative; padding-left: 20px; font: 12px "Liberation Sans", sans-serif; color: #555; }
.hbtn { width: 14px; height: 14px; background: #fff; border: 1px solid #bbb; font-size: 9px; line-height: 12px; text-align: center; flex: none; }
.htrack { width: 450px; height: 14px; background: #dadada; padding-left: 25px; margin: 0 1px; }
.hthumb { height: 14px; background: #fff; border: 1px solid #aaa; }
.hdots { width: 28px; text-align: center; color: #aaa; }
.addsheet { margin-left: 159px; width: 48px; display: flex; justify-content: flex-start; }
.sheettabs { display: flex; align-items: center; border-left: 1px solid #c0c0c0; height: 22px; padding-left: 1px; }
.stab { height: 22px; display: flex; align-items: center; justify-content: center; border-right: 1px solid #c0c0c0; }
.w-tri { width: 82px; } .w-vw { width: 83px; }
.stab.cur { width: 49px; height: 26px; background: #fff; border: 0; border-bottom: 2px solid #1f6e43; color: #1f6e43; font: 10px "DejaVu Sans", sans-serif; }
.w-tra { width: 94px; } .w-rec { width: 94px; }
.w-ar { width: 49px; font: 10px "DejaVu Sans", sans-serif; color: #777; }
.nav { display: flex; gap: 18px; margin-left: 36px; color: #ccc; font-size: 9px; }

/* Status */
.statusbar { height: 21px; background: #f3f3f3; display: flex; align-items: center; font: 11px "Liberation Sans", sans-serif; color: #aaa; position: relative; padding-left: 10px; }
.zoompct { width: 34px; }
.zplus { font: bold 14px "Liberation Sans", sans-serif; color: #555; width: 12px; }
.zslider { width: 93px; height: 1px; background: #aaa; position: relative; }
.zslider i { position: absolute; left: 46px; top: -3px; width: 1px; height: 7px; background: #aaa; }
.zminus { font: bold 14px "Liberation Sans", sans-serif; color: #555; margin-left: 4px; width: 21px; }
.vw { margin-right: 21px; }
.mode { position: absolute; right: 2px; top: 3px; font: 9.500px "DejaVu Sans", sans-serif; color: #888; }

/* Taskbar */
.taskbar { flex: 1; background: #000; display: flex; justify-content: space-between; align-items: center; color: #fff; }
.tb-left { display: flex; align-items: center; margin-left: -1px; height: 100%; }
.tk { position: relative; width: 46px; height: 100%; display: flex; align-items: center; justify-content: center; flex: none; }
.tk.on { background: #2b2b2b; }
.tk.run::after { content: ""; position: absolute; left: 4px; right: 4px; bottom: 0; height: 2px; background: #e4e4e4; }
.tk-sep { width: 2px; height: 20px; background: #2e2e2e; margin-right: 17px; flex: none; }
.hp { width: 22px; height: 22px; border-radius: 50%; background: #fff; color: #000; font: italic bold 13px/22px "Liberation Sans", sans-serif; text-align: center; }
.ltr-x { font: bold 11px "Liberation Sans", sans-serif; fill: #fff; }
.q { font: bold 14px "Liberation Sans", sans-serif; fill: #1f6fb0; }
.tb-right { display: flex; align-items: center; height: 100%; padding-right: 20px; }
.help { margin-right: 21px; }
.people { margin-right: 18px; }
.chev { margin-right: 7px; }
.batt { margin-right: 8px; }
.eng { font: 11px "Liberation Sans", sans-serif; margin-right: 9px; width: 24px; }
.clock { display: flex; flex-direction: column; align-items: center; width: 50px; margin-right: 11px; }
.date { font: 10.500px/16px "DejaVu Sans", sans-serif; direction: ltr; }
.time { direction: ltr; font: 11px/16px "DejaVu Sans", sans-serif; }
```
